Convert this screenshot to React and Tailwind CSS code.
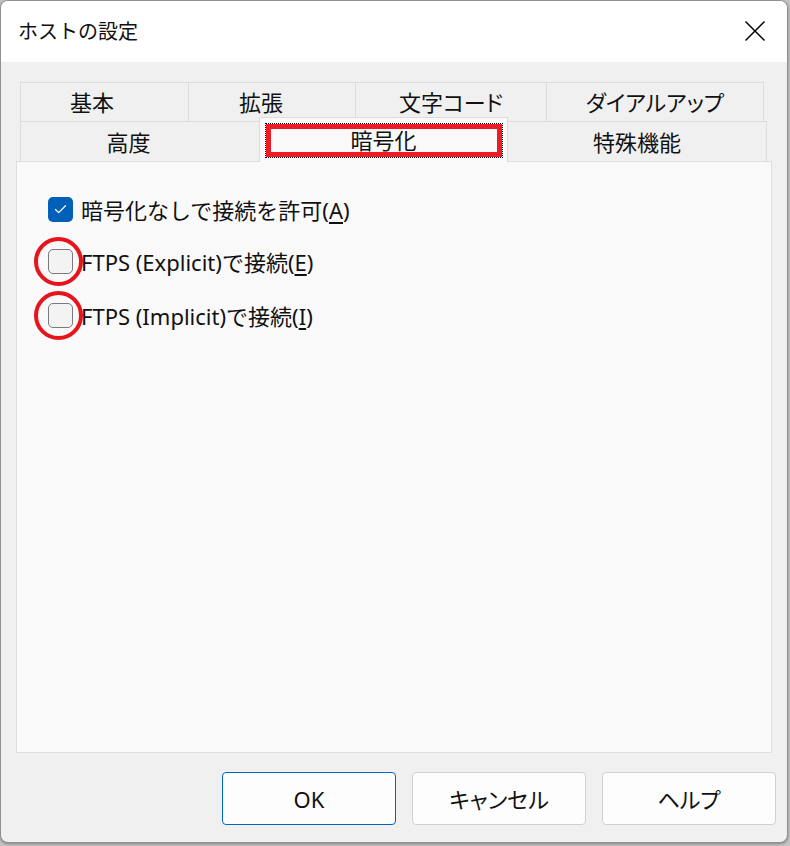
import { Check } from 'lucide-react';

const row1 = [
  { label: '基本', w: 'w-[169px]', pad: 'pr-[25px]' },
  { label: '拡張', w: 'w-[168px]', pad: 'pr-[22px]' },
  { label: '文字コード', w: 'w-[192px]', pad: '[font-feature-settings:"palt"]' },
  { label: 'ダイアルアップ', w: 'w-[218px]', pad: '[font-feature-settings:"palt"]' },
];

function Tab({ label, w, pad }) {
  return (
    <div
      className={`${w} h-full flex items-center justify-center ${pad} border border-[#dcdcdc] -ml-px first:ml-0 bg-[#f0f0f0] text-[22px] leading-none`}
    >
      {label}
    </div>
  );
}

function CheckRow({ checked, children, className }) {
  return (
    <div className={`flex items-center h-[25px] ${className}`}>
      {checked ? (
        <div className="w-[25px] h-[25px] rounded-[5px] bg-[#005fb8] flex items-center justify-center">
          <Check className="w-[15px] h-[15px] text-white" strokeWidth={2} />
        </div>
      ) : (
        <div className="w-[25px] h-[25px] rounded-[5px] border border-[#7a7a7a] bg-[#f3f3f3]" />
      )}
      <span className="ml-[8px] text-[22px] leading-none">{children}</span>
    </div>
  );
}

export default function App() {
  return (
    <div className="w-[790px] h-[846px] bg-[#c4c4c4] font-['Noto_Sans','Noto_Sans_CJK_JP',sans-serif] text-[#111]">
      <div className="w-[788px] h-[843px] rounded-[8px] border border-[#909090] overflow-hidden flex flex-col bg-[#f0f0f0] shadow-[0_1px_3px_rgba(0,0,0,0.35)]">
        {/* title bar */}
        <div className="h-[61px] bg-white flex items-center justify-between pl-[17px] pr-[21px] shrink-0">
          <span className="text-[20px] leading-none">ホストの設定</span>
          <svg width="22" height="22" viewBox="0 0 22 22" className="mt-[-2px]">
            <path d="M1.5 1.5 L20.5 20.5 M20.5 1.5 L1.5 20.5" stroke="#000" strokeWidth="1.5" fill="none" />
          </svg>
        </div>

        <div className="flex-1 flex flex-col px-[15px] pt-[20px]">
          {/* tabs */}
          <div className="mx-[4px]">
            <div className="flex h-[40px]">
              {row1.map((t) => (
                <Tab key={t.label} {...t} />
              ))}
            </div>
            <div className="flex h-[40px] -mt-px">
              <div className="w-[240px] h-[41px] flex items-center justify-center pr-[23px] border border-[#dcdcdc] border-b-0 bg-[#f0f0f0] text-[22px] leading-none">
                高度
              </div>
              <div className="relative z-10 w-[249px] h-[45px] -mt-[4px] -ml-px flex items-center justify-center border border-[#dcdcdc] border-b-0 bg-[#f9f9f9] text-[22px] leading-none">
                暗号化
                <div className="absolute left-[5px] top-[5px] w-[238px] h-[35px] border border-dotted border-black">
                  <div className="w-full h-full border-[5px] border-[#ed1c24]" />
                </div>
              </div>
              <div className="w-[260px] h-[41px] -ml-px flex items-center justify-center border border-[#dcdcdc] border-b-0 bg-[#f0f0f0] text-[22px] leading-none">
                特殊機能
              </div>
            </div>
          </div>

          {/* panel */}
          <div className="relative h-[592px] border border-[#dedede] bg-[#f9f9f9] pl-[31px] pt-[35px]">
            <CheckRow checked>
              暗号化なしで接続を許可(<span className="underline underline-offset-[3px]">A</span>)
            </CheckRow>
            <CheckRow className="mt-[27px]">
              FTPS (Explicit)で接続(<span className="underline underline-offset-[3px]">E</span>)
            </CheckRow>
            <CheckRow className="mt-[29px]">
              FTPS (Implicit)で接続(<span className="underline underline-offset-[3px]">I</span>)
            </CheckRow>

            <div className="absolute left-[17px] top-[75px] w-[49px] h-[49px] rounded-full border-[4px] border-[#e8141c]" />
            <div className="absolute left-[17px] top-[129px] w-[49px] h-[49px] rounded-full border-[4px] border-[#e8141c]" />
          </div>

          {/* buttons */}
          <div className="mt-[19px] -mr-[4px] flex justify-end gap-[16px]">
            <button className="w-[174px] h-[53px] rounded-[4px] border border-[#0067c0] bg-[#fdfdfd] text-[22px] leading-none">
              OK
            </button>
            <button className="w-[174px] h-[53px] rounded-[4px] border border-[#d0d0d0] bg-[#fdfdfd] text-[22px] leading-none [font-feature-settings:'palt']">
              キャンセル
            </button>
            <button className="w-[174px] h-[53px] rounded-[4px] border border-[#d0d0d0] bg-[#fdfdfd] text-[22px] leading-none [font-feature-settings:'palt']">
              ヘルプ
            </button>
          </div>
        </div>
      </div>
    </div>
  );
}
